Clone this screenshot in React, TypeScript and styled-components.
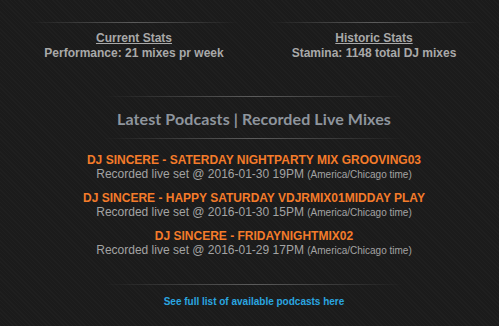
import React from "react";
import styled, { createGlobalStyle } from "styled-components";

const Global = createGlobalStyle`
  html, body { margin: 0; padding: 0; }
  body {
    width: 499px;
    height: 326px;
    overflow: hidden;
    background-color: #1b1b1b;
    background-image: repeating-linear-gradient(
      45deg,
      rgba(255,255,255,0.018) 0px,
      rgba(255,255,255,0.018) 1px,
      transparent 1px,
      transparent 3px
    );
    font-family: "Liberation Sans", Arial, sans-serif;
  }
`;

const Page = styled.div`
  width: 480px;
  margin-left: 14px;
  padding-top: 22px;
  display: flex;
  flex-direction: column;
  align-items: center;
`;

const Divider = styled.div<{ $w: number; $mt?: number }>`
  width: ${(p) => p.$w}px;
  height: 1px;
  margin-top: ${(p) => p.$mt ?? 0}px;
  background: linear-gradient(
    to right,
    rgba(90, 90, 90, 0) 0%,
    rgba(95, 95, 95, 0.95) 50%,
    rgba(90, 90, 90, 0) 100%
  );
`;

const StatsRow = styled.div`
  width: 100%;
  display: grid;
  grid-template-columns: 1fr 1fr;
`;

const StatCol = styled.div`
  display: flex;
  flex-direction: column;
  align-items: center;
`;

const StatBody = styled.div`
  margin-top: 8px;
  text-align: center;
  font-size: 12px;
  line-height: 15px;
  font-weight: bold;
  color: #a9a9a9;
`;

const StatTitle = styled.div`
  text-decoration: underline;
`;

const Heading = styled.h2`
  margin: 13px 0 10px;
  font-family: Lato, "Open Sans", sans-serif;
  font-weight: 700;
  font-size: 16px;
  line-height: 18px;
  color: #8e959d;
  letter-spacing: 0.1px;
`;

const List = styled.div`
  margin-top: 14px;
  display: flex;
  flex-direction: column;
  align-items: center;
  gap: 9px;
`;

const Entry = styled.div`
  text-align: center;
  font-size: 12px;
  line-height: 14px;
`;

const EntryTitle = styled.div`
  font-weight: bold;
  color: #f47b2a;
`;

const EntrySub = styled.div`
  color: #a3a3a3;
`;

const Zone = styled.span`
  font-size: 10px;
`;

const MoreLink = styled.a`
  margin-top: 10px;
  font-size: 10px;
  line-height: 14px;
  font-weight: bold;
  color: #2aa6e0;
  text-decoration: none;
`;

const podcasts = [
  { title: "DJ SINCERE - SATERDAY NIGHTPARTY MIX GROOVING03", when: "2016-01-30 19PM" },
  { title: "DJ SINCERE - HAPPY SATURDAY VDJRMIX01MIDDAY PLAY", when: "2016-01-30 15PM" },
  { title: "DJ SINCERE - FRIDAYNIGHTMIX02", when: "2016-01-29 17PM" },
];

export default function App() {
  return (
    <>
      <Global />
      <Page>
        <StatsRow>
          <StatCol>
            <Divider $w={210} />
            <StatBody>
              <StatTitle>Current Stats</StatTitle>
              <div>Performance: 21 mixes pr week</div>
            </StatBody>
          </StatCol>
          <StatCol>
            <Divider $w={210} />
            <StatBody>
              <StatTitle>Historic Stats</StatTitle>
              <div>Stamina: 1148 total DJ mixes</div>
            </StatBody>
          </StatCol>
        </StatsRow>
        <Divider $w={300} $mt={35} />
        <Heading>Latest Podcasts | Recorded Live Mixes</Heading>
        <Divider $w={300} />
        <List>
          {podcasts.map((p) => (
            <Entry key={p.title}>
              <EntryTitle>{p.title}</EntryTitle>
              <EntrySub>
                Recorded live set @ {p.when} <Zone>(America/Chicago time)</Zone>
              </EntrySub>
            </Entry>
          ))}
        </List>
        <Divider $w={300} $mt={26} />
        <MoreLink href="#">See full list of available podcasts here</MoreLink>
      </Page>
    </>
  );
}
